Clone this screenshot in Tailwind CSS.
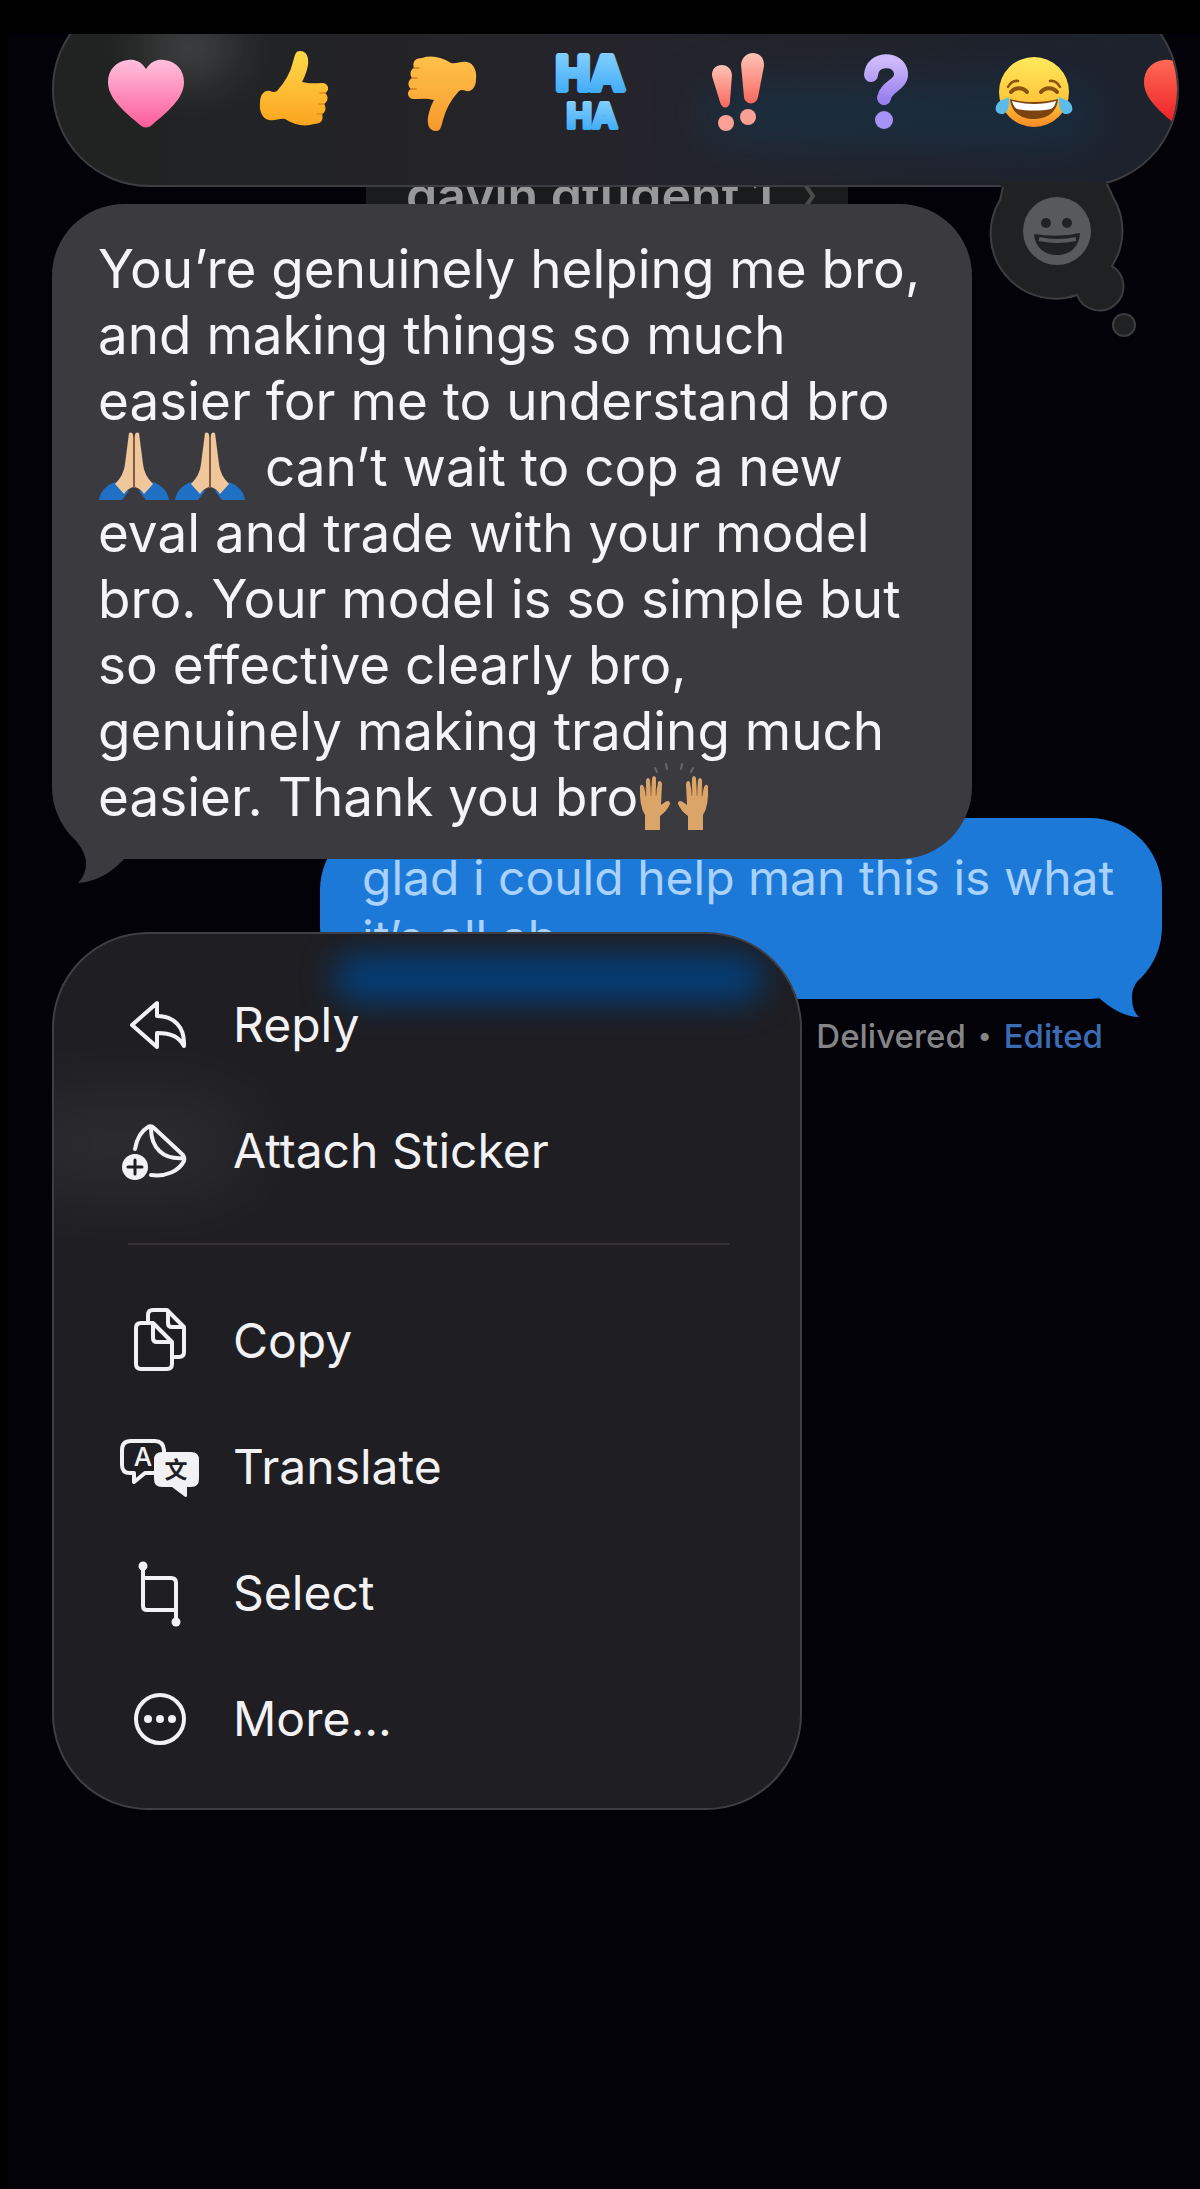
<!DOCTYPE html>
<html lang="en">
<head>
    <meta charset="UTF-8">
    <meta name="viewport" content="width=device-width, initial-scale=1.0">
    <title>Messages</title>
    <script src="https://cdn.jsdelivr.net/npm/@tailwindcss/browser@4"></script>
</head>
<body class="bg-black font-['Inter','Liberation_Sans',sans-serif]">
    <main class="min-h-screen border-t-[34px] border-l-8 border-black bg-[#020208] pl-[44px] pr-[21px] overflow-hidden">

        <!-- Reactions -->
        <div class="relative z-20 h-[153px]">
            <div class="absolute inset-x-0 bottom-0 flex h-[195px] items-center overflow-hidden rounded-[97px] border-2 border-[#3d3d41] bg-[#202024] pl-[18px] bg-linear-to-r from-[#212322] via-[#25242b] to-[#1d222d]">
                <div class="absolute left-[90px] top-6 h-[60px] w-[90px] rounded-full bg-white/15 blur-xl"></div>
                <div class="absolute right-20 bottom-10 h-[60px] w-[400px] rounded-full bg-[#0b4a6e]/30 blur-xl"></div>
                <button type="button" aria-label="Heart" class="relative flex w-[148px] shrink-0 justify-center">
                    <svg class="size-[100px]" viewBox="0 0 100 100">
                        <defs><linearGradient id="pink" x2="0" y2="1"><stop stop-color="#ffc0dc"/><stop offset="1" stop-color="#fd5c99"/></linearGradient></defs>
                        <path fill="url(#pink)" d="M50 29C55 21 62 19 68 20C80 21 88 30 88 42C88 59 71 72 56 85Q50 90 44 85C29 72 12 59 12 42C12 30 20 21 32 20C38 19 45 21 50 29Z"/>
                    </svg>
                </button>
                <button type="button" aria-label="Thumbs up" class="relative flex w-[148px] shrink-0 justify-center">
                    <svg class="size-[100px]" viewBox="0 0 100 100">
                        <defs><linearGradient id="hand" x2="0" y2="1"><stop stop-color="#ffd84a"/><stop offset="1" stop-color="#fba51f"/></linearGradient></defs>
                        <path fill="url(#hand)" d="M49 22C51 14 52 11 56 11C63 11 65 18 64 25Q62 35 58 42C65 44 72 43 78 43C85 43 86 51 81 53C85 56 84 62 80 64C83 68 81 73 78 74C80 80 77 84 70 84C61 87 50 85 41 79C36 78 31 81 25 80C18 79 15 70 16 63C16 55 20 50 26 51Q30 53 33 51Q45 38 49 22Z"/>
                        <path fill="none" stroke="#e98a16" stroke-width="1.5" stroke-linecap="round" d="M81 53H76M80 64H75M78 74H73"/>
                    </svg>
                </button>
                <button type="button" aria-label="Thumbs down" class="relative flex w-[148px] shrink-0 justify-center">
                    <svg class="size-[100px]" viewBox="0 0 100 100">
                        <defs><linearGradient id="handDown" x2="0" y2="1"><stop stop-color="#f79a2c"/><stop offset="1" stop-color="#ffc14a"/></linearGradient></defs>
                        <g transform="rotate(180 50 51)">
                            <path fill="url(#handDown)" d="M49 22C51 14 52 11 56 11C63 11 65 18 64 25Q62 35 58 42C65 44 72 43 78 43C85 43 86 51 81 53C85 56 84 62 80 64C83 68 81 73 78 74C80 80 77 84 70 84C61 87 50 85 41 79C36 78 31 81 25 80C18 79 15 70 16 63C16 55 20 50 26 51Q30 53 33 51Q45 38 49 22Z"/>
                            <path fill="none" stroke="#d97a1c" stroke-width="1.5" stroke-linecap="round" d="M81 53H76M80 64H75M78 74H73"/>
                        </g>
                    </svg>
                </button>
                <button type="button" aria-label="Ha ha" class="relative flex w-[148px] shrink-0 justify-center">
                    <svg class="size-[100px]" viewBox="0 0 100 100" font-family="Inter, sans-serif" font-weight="700" text-anchor="middle" fill="url(#haha)" stroke="url(#haha)" stroke-linejoin="round">
                        <defs><linearGradient id="haha" x2="0" y2="1"><stop stop-color="#8fd6ff"/><stop offset="1" stop-color="#34a5f5"/></linearGradient></defs>
                        <text x="50" y="50" font-size="46" stroke-width="6">HA</text>
                        <text x="52" y="88" font-size="34" stroke-width="4">HA</text>
                    </svg>
                </button>
                <button type="button" aria-label="Exclamation" class="relative flex w-[148px] shrink-0 justify-center">
                    <svg class="size-[100px]" viewBox="0 0 100 100">
                        <defs><linearGradient id="coral" x2="0" y2="1"><stop stop-color="#ffc3b6"/><stop offset="1" stop-color="#f9695c"/></linearGradient></defs>
                        <g fill="url(#coral)">
                            <path d="M24 36C23 22 43 21 44 35L42 61C42 69 34 70 32 62Z"/>
                            <path d="M53 25C54 9 77 9 76 26L70 57C68 66 57 65 56 57Z"/>
                        </g>
                        <circle cx="38" cy="83" r="8" fill="#fba094"/>
                        <circle cx="60" cy="77" r="8" fill="#fba094"/>
                    </svg>
                </button>
                <button type="button" aria-label="Question" class="relative flex w-[148px] shrink-0 justify-center">
                    <svg class="size-[100px]" viewBox="0 0 100 100">
                        <defs><linearGradient id="violet" x2="0" y2="1"><stop stop-color="#cdb9fb"/><stop offset="1" stop-color="#9a83f0"/></linearGradient></defs>
                        <path fill="none" stroke="url(#violet)" stroke-width="14" stroke-linecap="round" stroke-linejoin="round" d="M35 35C36 17 63 17 65 33C66 45 50 46 48 58"/>
                        <circle cx="48" cy="80" r="9" fill="#a594f5"/>
                    </svg>
                </button>
                <button type="button" aria-label="Tears of joy" class="relative flex w-[148px] shrink-0 justify-center">
                    <svg class="size-[100px]" viewBox="0 0 100 100">
                        <defs><linearGradient id="face" x2="0" y2="1"><stop stop-color="#ffe95c"/><stop offset=".6" stop-color="#ffc83c"/><stop offset="1" stop-color="#f78a25"/></linearGradient></defs>
                        <circle cx="50" cy="52" r="35" fill="url(#face)"/>
                        <path fill="#7b4310" d="M26 59C40 63 60 63 74 59C73 73 62 79 50 79C38 79 27 73 26 59Z"/>
                        <path fill="#fff" d="M28 61C42 65 58 65 72 61C71 66 69 68 67 69C56 71 44 71 33 69C30 67 29 65 28 61Z"/>
                        <g fill="none" stroke="#8a5312" stroke-linecap="round">
                            <path stroke-width="4" d="M27 52C31 47 39 47 43 52M57 52C61 47 69 47 73 52"/>
                            <path stroke-width="2.5" d="M24 47Q28 40 34 41M66 41Q72 40 76 47"/>
                        </g>
                        <path fill="#5bbce9" d="M25 57C26 66 23 75 17 74C9 73 11 64 16 61ZM75 57C74 66 77 75 83 74C91 73 89 64 84 61Z"/>
                    </svg>
                </button>
                <button type="button" aria-label="Red heart" class="relative flex w-[148px] shrink-0 justify-center">
                    <svg class="size-[100px]" viewBox="0 0 100 100">
                        <defs><linearGradient id="red" x2="0" y2="1"><stop stop-color="#ff6a55"/><stop offset="1" stop-color="#ec1c24"/></linearGradient></defs>
                        <path fill="url(#red)" d="M50 29C55 21 62 19 68 20C80 21 88 30 88 42C88 59 71 72 56 85Q50 90 44 85C29 72 12 59 12 42C12 30 20 21 32 20C38 19 45 21 50 29Z"/>
                    </svg>
                </button>
            </div>
            <!-- Emoji picker bubble hanging off the bar -->
            <button type="button" aria-label="More emoji" class="absolute right-[29px] top-[141px]">
                <svg class="size-[170px]" viewBox="980 175 170 170" fill="#202122">
                    <path d="M1000 200L1003 189L998 182H1106L1107 184L1113 197A65 65 0 0 1 1112 266A24 24 0 1 1 1077 295A65 65 0 0 1 1000 200Z"/>
                    <path fill="none" stroke="#3d3d41" stroke-width="2" d="M1107 184L1113 197A65 65 0 0 1 1112 266A24 24 0 1 1 1077 295A65 65 0 0 1 1000 200L1003 187"/>
                    <circle cx="1124" cy="325" r="11" stroke="#3d3d41" stroke-width="2"/>
                    <circle cx="1057" cy="231" r="34" fill="#58595a"/>
                    <circle cx="1046" cy="223" r="5"/>
                    <circle cx="1067" cy="223" r="5"/>
                    <path d="M1034 234Q1057 238 1080 233C1079 248 1069 255 1057 255C1045 255 1035 248 1034 234Z"/>
                    <path stroke="#58595a" stroke-width="4" fill="none" d="M1039 239Q1057 243 1076 239"/>
                </svg>
            </button>
        </div>

        <!-- Contact name, mostly hidden behind the bubble -->
        <div class="ml-[314px] flex h-[17px] w-[482px] items-center gap-7 overflow-hidden bg-[#1a1b1c] pl-10 text-[50px] leading-[17px] font-semibold text-[#98989b]">
            <span>gavin gtudent 1</span>
            <svg class="h-8 w-4 shrink-0" viewBox="0 0 16 32" fill="none" stroke="#4a4c4a" stroke-width="4"><path d="M3 3L12 16L3 29"/></svg>
        </div>

        <!-- Received message -->
        <div class="relative z-10 w-[920px] max-w-full rounded-[72px] bg-[#3b3a3e] pl-[46px] pr-10 pt-8 pb-[29px]">
            <p class="text-[53px] leading-[66px] text-[#f5f5f7]">You’re genuinely helping me bro, and making things so much easier for me to understand bro
                <svg class="-my-3 inline-block h-[70px] w-[72px] align-[-3px]" viewBox="0 0 72 70">
                    <path fill="#1f6fc4" d="M1 69Q3 56 17 51L31 60L24 69ZM71 69Q69 56 55 51L41 60L48 69Z"/>
                    <path fill="#f0c79a" d="M31 2Q36 0 35 8V56Q29 58 26 63L17 53Q26 44 27 33ZM41 2Q36 0 37 8V56Q43 58 46 63L55 53Q46 44 45 33Z"/>
                    <path stroke="#9c6b45" stroke-width="1.5" d="M36 6V57"/>
                </svg><svg class="-my-3 inline-block h-[70px] w-[72px] ml-1 mr-1 align-[-3px]" viewBox="0 0 72 70">
                    <path fill="#1f6fc4" d="M1 69Q3 56 17 51L31 60L24 69ZM71 69Q69 56 55 51L41 60L48 69Z"/>
                    <path fill="#f0c79a" d="M31 2Q36 0 35 8V56Q29 58 26 63L17 53Q26 44 27 33ZM41 2Q36 0 37 8V56Q43 58 46 63L55 53Q46 44 45 33Z"/>
                    <path stroke="#9c6b45" stroke-width="1.5" d="M36 6V57"/>
                </svg>
                can’t wait to cop a new eval and trade with your model bro. Your model is so simple but so effective clearly bro, genuinely making trading much easier. Thank you bro<svg class="-my-3 inline-block h-[70px] w-[72px] align-[-3px]" viewBox="0 0 72 70">
                    <path fill="none" stroke="#66666b" stroke-width="2" stroke-linecap="round" d="M17 7L19 11M28 3L29 8M44 3L43 8M55 7L53 11"/>
                    <g id="palm">
                        <path fill="#dba468" d="M7 69V54Q1 45 2 25Q4 22 6 26L8 36V19Q10 15 12 19L13 34L14 17Q16 13 18 17V35L20 21Q23 18 24 23L23 44L27 41Q32 38 32 43Q29 50 22 55V69Z"/>
                        <path fill="none" stroke="#a87541" stroke-width="1" d="M8 35V26M13 35V26M18 35V27"/>
                    </g>
                    <use href="#palm" transform="matrix(-1 0 0 1 72 0)"/>
                </svg></p>
            <svg class="absolute left-3 -bottom-[26px] h-[60px] w-[64px]" viewBox="64 824 64 60" fill="#3b3a3e"><path d="M66 829Q86 848 86 862Q86 874 78 882Q104 880 124 858L110 840Z"/></svg>
        </div>

        <!-- Sent message -->
        <div class="relative -mt-[41px] ml-auto mr-[17px] h-[181px] w-[842px] rounded-[72px] bg-[#1c79d8] pl-[42px] pt-[30px]">
            <p class="text-[48px] leading-[60px] text-[#a9d2ff]">glad i could help man this is what<br>it’s all ab</p>
            <svg class="absolute right-4 -bottom-5 h-[60px] w-[60px]" viewBox="1086 958 60 60" fill="#1c79d8"><path d="M1139 978Q1131 988 1132 997Q1132 1010 1139 1016Q1120 1016 1098 996L1110 975Z"/></svg>
        </div>
        <p class="mr-[76px] mt-4 flex items-center justify-end gap-3 text-[33px] leading-[42px] font-medium text-[#858587]">Delivered <span class="text-[26px]">•</span> <a href="#" class="text-[#3c6cb4]">Edited</a></p>

        <!-- Context menu -->
        <div class="relative z-10 -mt-[125px] w-[750px] max-w-full overflow-hidden rounded-[96px] border-2 border-[#3f3f43] bg-[#1f1e23] pt-7 pb-[26px] text-[48px] text-[#f2f2f5]">
            <div class="absolute left-[280px] top-5 h-12 w-[430px] rounded-full bg-[#033e78] blur-lg"></div>
            <div class="absolute -left-10 top-[170px] h-20 w-[230px] rounded-full bg-white/8 blur-2xl"></div>
            <button type="button" class="relative flex h-[126px] w-full items-center gap-[33px] pl-[66px]">
                <svg class="size-20" viewBox="120 985 80 80" fill="none" stroke="currentColor" stroke-width="4" stroke-linejoin="round"><path d="M132 1025L157 1003V1016C174 1016 185 1027 184 1046C179 1037 172 1033 157 1033V1047Z"/></svg>
                Reply
            </button>
            <button type="button" class="relative flex h-[126px] w-full items-center gap-[33px] pl-[66px]">
                <svg class="size-20" viewBox="120 1111 80 80" fill="none" stroke="currentColor" stroke-width="4" stroke-linecap="round" stroke-linejoin="round">
                    <path d="M135 1149C137 1137 143 1130 148 1127Q151 1125 154 1128L183 1155Q185 1158 184 1161C179 1171 166 1177 151 1175M151 1128C151 1148 163 1160 184 1158"/>
                    <circle cx="135" cy="1167" r="13" fill="currentColor" stroke="none"/>
                    <path stroke="#1f1e23" stroke-width="3" d="M128 1167H142M135 1160V1174"/>
                </svg>
                Attach Sticker
            </button>
            <hr class="relative ml-[74px] mr-[70px] mt-[29px] mb-[33px] border-t-2 border-[#353033]">
            <button type="button" class="relative flex h-[126px] w-full items-center gap-[33px] pl-[66px]">
                <svg class="size-20" viewBox="120 1301 80 80" fill="none" stroke="currentColor" stroke-width="4" stroke-linejoin="round">
                    <path d="M141 1323H153L172 1342V1364Q172 1369 167 1369H141Q136 1369 136 1364V1328Q136 1323 141 1323ZM153 1323V1338Q153 1342 157 1342H172"/>
                    <path d="M148 1323V1315Q148 1310 153 1310H167L184 1327V1352Q184 1357 179 1357H172M168 1310V1323Q168 1327 172 1327H184"/>
                </svg>
                Copy
            </button>
            <button type="button" class="relative flex h-[126px] w-full items-center gap-[33px] pl-[66px]">
                <svg class="size-20" viewBox="120 1426 80 80">
                    <path fill="none" stroke="currentColor" stroke-width="4" stroke-linejoin="round" d="M154 1472H145L134 1481V1472H130Q122 1472 122 1464V1449Q122 1440 131 1440H155Q163 1440 164 1449V1452"/>
                    <path fill="currentColor" d="M162 1451H191Q199 1451 199 1459V1478Q199 1486 191 1486H187V1495Q186 1497 184 1495L172 1486H162Q154 1486 154 1478V1459Q154 1451 162 1451Z"/>
                    <text x="143" y="1465" font-size="26" font-weight="500" text-anchor="middle" fill="currentColor" font-family="Inter, sans-serif">A</text>
                    <text x="176" y="1477" font-size="23" font-weight="700" text-anchor="middle" fill="#1f1e23" font-family="Noto Sans CJK SC, sans-serif">文</text>
                </svg>
                Translate
            </button>
            <button type="button" class="relative flex h-[126px] w-full items-center gap-[33px] pl-[66px]">
                <svg class="size-20" viewBox="120 1552 80 80" fill="none" stroke="currentColor" stroke-width="4">
                    <path d="M143 1565V1605Q143 1609 147 1609H176M176 1621V1582Q176 1577 171 1577H143"/>
                    <circle cx="143" cy="1565" r="4.5" fill="currentColor" stroke="none"/>
                    <circle cx="176" cy="1621" r="4.5" fill="currentColor" stroke="none"/>
                </svg>
                Select
            </button>
            <button type="button" class="relative flex h-[126px] w-full items-center gap-[33px] pl-[66px]">
                <svg class="size-20" viewBox="120 1678 80 80" fill="currentColor">
                    <circle cx="160" cy="1718" r="24" fill="none" stroke="currentColor" stroke-width="4"/>
                    <circle cx="148" cy="1718" r="4"/><circle cx="160" cy="1718" r="4"/><circle cx="172" cy="1718" r="4"/>
                </svg>
                More...
            </button>
        </div>
    </main>
</body>
</html>
